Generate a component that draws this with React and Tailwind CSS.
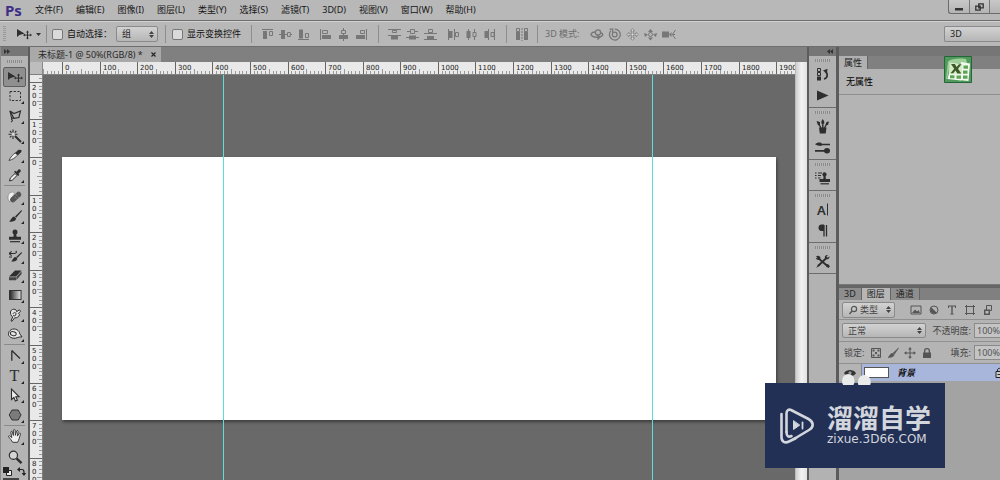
import React, { useLayoutEffect, useRef, useState } from "react";

const MENUS = ["文件(F)", "编辑(E)", "图像(I)", "图层(L)", "类型(Y)", "选择(S)", "滤镜(T)", "3D(D)", "视图(V)", "窗口(W)", "帮助(H)"];
const STEP = 37.59;

function Svg({ w = 14, h = 14, children, className = "" }) {
  return (
    <svg width={w} height={h} viewBox={`0 0 ${w} ${h}`} className={`shrink-0 ${className}`} fill="none" stroke="none" aria-hidden="true">
      {children}
    </svg>
  );
}

/* ---------- tool icons, 16 x 16 ---------- */

const D = "#2e2e2e";
const MoveIcon = () => (
  <Svg w={16} h={12}>
    <path d="M1 1v8l2.4-2L8.5 5.6z" fill={D} />
    <path d="M11.5 3.6v7M8 7.1h7" stroke={D} strokeWidth="1" />
    <path d="M11.5 2.6l1.5 1.8h-3zM11.5 11.6l1.5-1.8h-3zM7 7.1l1.8-1.5v3zM16 7.1l-1.8-1.5v3z" fill={D} />
  </Svg>
);

const TOOLS = {
  marquee: ["矩形选框", <rect x="3" y="3.5" width="10.5" height="9" stroke={D} strokeDasharray="2.2 1.5" />],
  lasso: ["套索", <><path d="M3 3l4 2.6L13.5 3l-1.6 6.5-5 .8z" stroke={D} strokeWidth="1.2" /><path d="M6.9 10.3c-2-.6-3 .6-1.9 1.4s-.2 1.8-1 2.3M3 3l1.6 7" stroke={D} strokeWidth="1.1" /></>],
  wand: ["魔棒", <><path d="M8 8l6 6" stroke={D} strokeWidth="2" /><path d="M6 1.5v3M6 8v3M1.5 6.2h3M8 6.2h2.6M2.9 3l1.7 1.7M9.3 3L7.8 4.6M2.9 9.4l1.6-1.6" stroke={D} strokeWidth="1.1" /><circle cx="6.2" cy="6.2" r="1.1" fill="#ddd" /></>],
  slice: ["切片", <><path d="M2 13.5c1.5-3.6 4-6 6.4-7.6l2.2 2.2c-2.2 2.6-5 4.5-8.6 5.4z" fill="#eee" stroke={D} strokeWidth=".8" /><path d="M8 6l3.5-3.2 3 .2-.2 2L11 8.3z" fill={D} /></>],
  dropper: ["吸管", <><path d="M2.5 14l.8-3L8 6.5l2 2-4.7 4.6z" fill="#eee" stroke={D} strokeWidth="1" /><path d="M7 4.8l1.2-1 1.3.9 2-2.2c1-1 3.2.8 2 2.2l-2 2 .8 1.3-1.2 1.1z" fill={D} /></>],
  heal: ["修复画笔", <><path d="M1.5 5.5c2-3 5-3 6-1l-4.5 8c-2 0-2.5-4-1.5-7z" fill="#eee" stroke="#777" strokeWidth=".6" /><rect x="2.2" y="5.4" width="13" height="5.4" rx="2.5" transform="rotate(-42 8.7 8.1)" fill="#555" /><path d="M6.5 6.5l3.5 3.8M8.5 5l3.2 3.6" stroke="#aaa" strokeWidth=".8" strokeDasharray="1 1" /></>],
  brush: ["画笔", <><path d="M14.5 2L8 8.6l1.2 1.2L15 3z" fill={D} /><path d="M7.2 8.6l2 2c-.6 2.7-3.4 3.2-7.2 3 2-.8 2-4.4 5.2-5z" fill={D} /></>],
  stamp: ["仿制图章", <><circle cx="8" cy="4" r="2.5" fill={D} /><path d="M6.9 5h2.2l.5 3.8h4.4v3H2v-3h4.4z" fill={D} /><path d="M3 13.7h10" stroke={D} strokeWidth="1.2" /></>],
  history: ["历史记录画笔", <><path d="M14.5 4L9 9.2l1 1 5-5.2z" fill={D} /><path d="M8.6 9l1.8 1.9c-.8 2.3-3.4 2.7-6.4 2.5 1.9-.8 1.8-3.8 4.6-4.4z" fill={D} /><path d="M2 5.5h5c2 0 3-1.2 1.8-2.5M2.2 5.4l2.4-2M2.2 5.6l2.4 2M2 9h3" stroke={D} strokeWidth="1.2" /></>],
  eraser: ["橡皮擦", <><path d="M2 9.500L8 3.500h6.500L9 9.500z" fill={D} /><path d="M2 10.200h7v3H2zM9.400 10l5.200-5.700v2.800l-5.200 6z" fill="#444" /></>],
  gradient: ["渐变", <><defs><linearGradient id="tool-gradient"><stop stopColor="#222" /><stop offset="1" stopColor="#e6e6e6" /></linearGradient></defs><rect x="2.5" y="3.5" width="11.5" height="9" fill="url(#tool-gradient)" stroke="#333" /></>],
  smudge: ["涂抹", <><path d="M4 13.8L5.700 10C2 7 3.200 2.200 6.800 2.200c2.200 0 2.800 1.400 2.800 2.500l2.800-1.900 1.200 1.400-2.200 2.200 1.200 1.300c-.6 2-2.600 3.400-5 3.100L5 14.300z" fill="#e2e2e2" stroke={D} strokeWidth="1" /><path d="M6 7c.5-2 3-2 3 0s-1.800 2.200-3 1.500" stroke={D} /></>],
  sponge: ["海绵", <><path d="M1.500 7.200c1-4.500 6.700-5.500 9.700-2.500 1 1 1.500 2 1.500 3l2.300 3.200c-3.700-.4-6 2-9 1.300C3 11.500 1 9.800 1.500 7.200z" fill="#e6e6e6" stroke={D} strokeWidth="1" /><ellipse cx="6.3" cy="7.6" rx="3" ry="2" stroke={D} strokeWidth="1" transform="rotate(14 6 7.5)" /></>],
  pen: ["钢笔", <path d="M4.8 2.5v10.3M4.8 2.5l8.2 8" stroke={D} strokeWidth="1.3" />],
  arrow: ["路径选择", <path d="M4.5 2v10.5l2.4-2 1.5 3.6 2-.9-1.6-3.4h3.3z" fill="#eee" stroke={D} strokeWidth="1.1" />],
  shape: ["多边形", <path d="M5 3h6.2l2.8 5-2.8 5H5L2.2 8z" fill="#7b7b7b" stroke="#333" />],
  hand: ["抓手", <path d="M5.7 14.3C4.7 12 2.8 10.6 1.5 8.7c-.2-1 .9-1.3 1.7-.5l1.6 1.5-1-5.6c.1-1 1.4-1 1.6 0l1 3.4V2.3c.2-1.1 1.6-1.1 1.7 0l.3 5 1.2-4.2c.4-1 1.6-.7 1.5.3l-.7 4.7 1.7-2.6c.6-.8 1.7-.3 1.4.6-1 3-1.4 5.7-2.9 8.2z" fill="#eee" stroke={D} strokeWidth=".9" />],
  zoom: ["缩放", <><circle cx="6.4" cy="6.2" r="4.1" fill="#d4d4d4" stroke={D} strokeWidth="1.2" /><path d="M9.5 9.3l5 4.8" stroke={D} strokeWidth="2.4" /></>],
};

function Tool({ id }) {
  const [label, art] = TOOLS[id] || [];
  return (
    <button aria-label={id === "type" ? "文字" : label} className="relative flex min-h-0 items-center justify-center">
      {id === "type" ? (
        <span className="font-['Liberation_Serif'] text-[16px] leading-4 text-[#2e2e2e]">T</span>
      ) : (
        <Svg w={16} h={16} className="max-h-full">{art}</Svg>
      )}
      {id !== "zoom" && (
        <Svg w={3} h={3} className="absolute bottom-[2px] right-[2px]"><path d="M3 0v3H0z" fill="#222" /></Svg>
      )}
    </button>
  );
}

const Rule = () => <div className="mx-[3px] h-px shrink-0 bg-[#8a8a8a]" />;
const Grip = () => (
  <div className="mx-auto h-[3px] w-[15px] shrink-0 bg-[repeating-linear-gradient(90deg,#8a8a8a_0_1px,#b8b8b8_1px_2px)]" />
);

function ToolBar() {
  return (
    <aside className="flex w-7 shrink-0 flex-col border-l border-[#8a8a8a] bg-[#b4b4b4]">
      <div className="flex h-[9px] shrink-0 items-center bg-[#767676] pl-[3px]">
        <Svg w={6} h={5}><path d="M0 0l3 2.5L0 5zM3 0l3 2.5L3 5z" fill="#333" /></Svg>
      </div>
      <div className="py-1"><Grip /></div>
      <div className="grid h-[118px] shrink-0 auto-rows-fr px-[2px]">
        <button aria-label="移动" className="flex items-center justify-center rounded-[2px] border border-[#5e5e5e] bg-[#8f8f8f]"><MoveIcon /></button>
        {["marquee", "lasso", "wand", "slice", "dropper"].map((t) => <Tool key={t} id={t} />)}
      </div>
      <Rule />
      <div className="grid h-[158px] shrink-0 auto-rows-fr px-[2px] pt-px">
        {["heal", "brush", "stamp", "history", "eraser", "gradient", "smudge", "sponge"].map((t) => <Tool key={t} id={t} />)}
      </div>
      <Rule />
      <div className="grid h-[80px] shrink-0 auto-rows-fr px-[2px] pt-px">
        {["pen", "type", "arrow", "shape"].map((t) => <Tool key={t} id={t} />)}
      </div>
      <Rule />
      <div className="grid h-[41px] shrink-0 auto-rows-fr px-[2px]">
        {["hand", "zoom"].map((t) => <Tool key={t} id={t} />)}
      </div>
      <div className="flex shrink-0 justify-between px-[2px]">
        <Svg w={9} h={9}><path d="M3.5 3.5h5v5h-5z" fill="#eee" stroke="#222" /><path d="M0 0h6v6H0z" fill="#222" /></Svg>
        <Svg w={9} h={9}><path d="M2 2.5h3c1.5 0 2 1 2 3v1" stroke="#222" strokeWidth="1.2" /><path d="M0 2.5L3 0v5zM7 9L4.6 6h4.6z" fill="#222" /></Svg>
      </div>
      <div className="mt-[2px] ml-[2px] h-4 w-4 border border-[#444] bg-[#222]" />
    </aside>
  );
}

/* ---------- options bar ---------- */

const Sep = () => <div className="h-[18px] w-px shrink-0 bg-[#8e8e8e]" />;
const A = "#777";

const ALIGN = [
  ["顶对齐", <><path d="M1 1.5h11" stroke={A} /><path d="M2 3h4v8H2z" fill={A} /><path d="M8.5 3.5h3v4h-3z" stroke={A} /></>],
  ["垂直居中对齐", <><path d="M0 6.5h13" stroke={A} /><path d="M2 2h4v9H2z" fill={A} /><path d="M8.5 4.5h2.8v4H8.5z" stroke={A} fill="#b8b8b8" /></>],
  ["底对齐", <><path d="M1 11.5h11" stroke={A} /><path d="M2 1.5h4v9H2z" fill={A} /><path d="M8.5 5.5h3v4h-3z" stroke={A} /></>],
  ["左对齐", <><path d="M1.5 1v11" stroke={A} /><path d="M3 7h9v4H3z" fill={A} /><path d="M3.5 2.5h5v3h-5z" stroke={A} /></>],
  ["水平居中对齐", <><path d="M6.5 0v13" stroke={A} /><path d="M2 7h9v4H2z" fill={A} /><path d="M4.5 2.5h4v3h-4z" stroke={A} fill="#b8b8b8" /></>],
  ["右对齐", <><path d="M11.5 1v11" stroke={A} /><path d="M1 7h9v4H1z" fill={A} /><path d="M5.5 2.5h4v3h-4z" stroke={A} /></>],
];
const DISTRIBUTE = [
  ["按顶分布", <><path d="M0 1.5h13M0 7.5h13" stroke={A} /><path d="M3 8h7v3.5H3z" fill={A} /><path d="M4.5 2.5h4v2h-4z" stroke={A} /></>],
  ["垂直居中分布", <><path d="M1 3.5h11M0 9.5h13" stroke={A} /><path d="M3 7.5h7v4H3z" fill={A} /><path d="M4.5 1.5h4v4h-4z" stroke={A} fill="#b8b8b8" /></>],
  ["按底分布", <><path d="M0 5.5h13M0 11.5h13" stroke={A} /><path d="M3 8h7v3H3z" fill={A} /><path d="M4.5 1.5h4v3h-4z" stroke={A} /></>],
  ["按左分布", <><path d="M1.5 1v11M7.5 1v11" stroke={A} /><path d="M2 3h3.5v7H2z" fill={A} /><path d="M8.5 4.5h3v4h-3z" stroke={A} /></>],
  ["水平居中分布", <><path d="M3.5 1v11M9.5 1v11" stroke={A} /><path d="M1.5 3h4v7h-4z" fill={A} /><path d="M8 4.5h3v4H8z" stroke={A} fill="#b8b8b8" /></>],
  ["按右分布", <><path d="M5.5 1v11M11.5 1v11" stroke={A} /><path d="M1.5 3H5v7H1.5z" fill={A} /><path d="M8 4.5h3v4H8z" stroke={A} /></>],
];
const MODES = [
  ["旋转", <><circle cx="8" cy="4.4" r="2.6" stroke={A} strokeWidth="1.3" /><path d="M5.5 4C2 4 0 6 1.5 7.6s5 1.8 7.5 1.4c4-.6 5-3 2-4.2M7 7l3 2-2.6 2.4" stroke={A} strokeWidth="1.4" /></>],
  ["滚动", <><circle cx="6.700" cy="6.500" r="2.400" stroke={A} strokeWidth="1.3" /><path d="M3 2.800a5.400 5.400 0 1 0 3.700-1.600M1.500 1.200h3.200v3.200" stroke={A} strokeWidth="1.3" /></>],
  ["拖动", <path d="M6.500.7l2 2.200H7.200v2.900h2.900V4.500l2.200 2-2.200 2V7.200H7.200v2.900h1.300l-2 2.200-2-2.200h1.300V7.200H2.900v1.300l-2.200-2 2.200-2v1.300h2.900V2.900H4.500z" fill="#ddd" stroke={A} strokeWidth=".8" />],
  ["滑动", <><circle cx="6.5" cy="6.5" r="2" stroke={A} /><path d="M6.5 1l2.500 3H4zM6.500 12.500L9 9.500H4zM0 5l4 1.500L1 9zM13 5L9 6.500 12 9z" fill={A} /></>],
  ["缩放", <><path d="M0 3.5h7v6H0z" fill={A} /><path d="M7 6.5l2.5-2.4v4.8z" fill={A} /><path d="M13.5 2l-3.2 4.5 3.2 4.5M10.5 6.5H13" stroke={A} /></>],
];

const IconGroup = ({ items, gap }) => (
  <div className={`flex items-center ${gap}`}>
    {items.map(([label, art]) => (
      <button key={label} aria-label={label} className="shrink-0"><Svg w={14} h={13}>{art}</Svg></button>
    ))}
  </div>
);

const UpDown = ({ className = "" }) => (
  <Svg w={5} h={7} className={`pointer-events-none ${className}`}><path d="M2.5 0L5 3H0zM2.5 7L0 4h5z" fill="#444" /></Svg>
);

function Picker({ label, value, className, pad = "pl-[5px]", tone = "text-[#1c1c1c]", arrows = true, icon }) {
  return (
    <div className={`relative flex shrink-0 items-center rounded-[2px] border border-[#8a8a8a] bg-linear-to-b from-[#d2d2d2] to-[#b6b6b6] ${className}`}>
      {icon}
      <select aria-label={label} className={`h-full w-full appearance-none bg-transparent leading-3 outline-none ${pad} ${tone}`}>
        <option>{value}</option>
      </select>
      {arrows && <UpDown className="absolute right-[3px]" />}
    </div>
  );
}

const Check = ({ id, children }) => (
  <div className="flex shrink-0 items-center gap-[4px]">
    <input id={id} type="checkbox" className="h-[11px] w-[11px] appearance-none rounded-[2px] border border-[#777] bg-[#dadada]" />
    <label htmlFor={id} className="whitespace-nowrap">{children}</label>
  </div>
);

function OptionsBar() {
  return (
    <div className="flex h-[25px] shrink-0 items-center overflow-hidden border-t border-[#d0d0d0] bg-[#b8b8b8] text-[#111]">
      <div className="flex w-[46px] shrink-0 items-center">
        <div className="ml-[3px] h-4 w-[3px] bg-[repeating-linear-gradient(#999_0_1px,#b8b8b8_1px_2px)]" />
        <button aria-label="移动工具预设" className="ml-[10px] flex items-center gap-[4px]">
          <MoveIcon /><Svg w={5} h={3}><path d="M0 0h5L2.5 3z" fill="#333" /></Svg>
        </button>
      </div>
      <Sep />
      <div className="flex w-[118px] shrink-0 items-center justify-between pr-[7px] pl-[5px]">
        <Check id="auto-select">自动选择：</Check>
        <Picker label="自动选择" value="组" className="h-4 w-[42px]" />
      </div>
      <Sep />
      <div className="w-[85px] shrink-0 pl-[6px]"><Check id="show-transform">显示变换控件</Check></div>
      <Sep />
      <div className="flex w-[126px] shrink-0 items-center justify-between px-[9px]">
        <IconGroup items={ALIGN.slice(0, 3)} gap="gap-[4px]" />
        <IconGroup items={ALIGN.slice(3)} gap="gap-[4px]" />
      </div>
      <Sep />
      <div className="flex w-[127px] shrink-0 items-center justify-between px-[9px]">
        <IconGroup items={DISTRIBUTE.slice(0, 3)} gap="gap-[4px]" />
        <IconGroup items={DISTRIBUTE.slice(3)} gap="gap-[4px]" />
      </div>
      <Sep />
      <button aria-label="自动对齐图层" className="flex w-[30px] shrink-0 justify-center">
        <Svg w={14} h={13}><path d="M1 4h4v8H1zM9 4h4v8H9z" fill={A} /><path d="M1.5.5h3v3h-3zM9.5.5h3v3h-3z" stroke={A} /><path d="M7 0v13" stroke={A} strokeDasharray="2 1" /></Svg>
      </button>
      <Sep />
      <div className="w-[52px] shrink-0 pl-[7px] text-[#6c6c6c]">3D 模式:</div>
      <IconGroup items={MODES} gap="gap-[4px]" />
      <Picker label="工作区" value="3D" className="ml-auto h-4 w-[56px] rounded-r-none border-r-0" arrows={false} />
    </div>
  );
}

function MenuBar() {
  return (
    <header className="flex h-[21px] shrink-0 items-center overflow-hidden border-b border-[#6e6e6e] bg-[#b8b8b8]">
      <div className="w-[35px] shrink-0 pl-[5px] text-[15px] leading-4 font-bold text-[#3d2f86]">Ps</div>
      <nav className="flex gap-[13px] text-[#161616]">
        {MENUS.map((m) => <button key={m} className="shrink-0 whitespace-nowrap">{m}</button>)}
      </nav>
      <div className="ml-auto flex h-[14px] w-[52px] shrink-0 self-start rounded-bl-[3px] border-b border-l border-[#6b6b6b] bg-linear-to-b from-[#c8c8c8] to-[#b4b4b4]">
        <button aria-label="最小化" className="flex w-[21px] justify-center border-r border-[#777] pt-2"><Svg w={8} h={3}><path d="M0 0h8v2.5H0z" fill="#333" /></Svg></button>
        <button aria-label="还原" className="flex w-[20px] items-center justify-center border-r border-[#777]">
          <Svg w={9} h={8}><path d="M3.8.8h4.4v4H3.800zM.8 3.200h4.400v4H.8z" stroke="#333" strokeWidth="1.3" fill="#bbb" /></Svg>
        </button>
      </div>
    </header>
  );
}

/* ---------- document ---------- */

function useSize() {
  const ref = useRef(null);
  const [size, setSize] = useState({ width: 0, height: 0 });
  useLayoutEffect(() => {
    const read = () => {
      const r = ref.current.getBoundingClientRect();
      setSize({ width: r.width, height: r.height });
    };
    read();
    window.addEventListener("resize", read);
    return () => window.removeEventListener("resize", read);
  }, []);
  return [ref, size];
}

const ticks = (length, origin) => {
  const unit = STEP / 10;
  const out = [];
  for (let i = -Math.floor(origin / unit); origin + i * unit < length; i++) out.push([i, Math.round(origin + i * unit) + 0.5]);
  return out;
};
const tickStart = (i) => (i % 10 === 0 ? 0 : i % 5 === 0 ? 7 : 9);
const tickTone = (i) => (i % 10 === 0 ? "#666" : "#999");

function HorizontalRuler() {
  const [ref, { width }] = useSize();
  const marks = ticks(width, 19);
  return (
    <svg ref={ref} className="block h-3 w-full min-w-0 flex-1 bg-[#e9e9e9]" aria-label="水平标尺">
      {marks.map(([i, x]) => <path key={i} d={`M${x} ${tickStart(i)}V12`} stroke={tickTone(i)} />)}
      {marks.filter(([i]) => i % 10 === 0).map(([i, x]) => (
        <text key={i} x={x + 2.5} y="8" fontSize="7" fill="#222" className="font-['DejaVu_Sans']">{Math.abs(i * 10)}</text>
      ))}
    </svg>
  );
}

function VerticalRuler() {
  const [ref, { height }] = useSize();
  const marks = ticks(height, 82);
  return (
    <svg ref={ref} className="block h-full w-3 shrink-0 bg-[#e9e9e9]" aria-label="垂直标尺">
      {marks.map(([i, y]) => <path key={i} d={`M${tickStart(i)} ${y}H12`} stroke={tickTone(i)} />)}
      {marks.filter(([i]) => i % 10 === 0).map(([i, y]) =>
        String(Math.abs(i * 10)).split("").map((c, k) => (
          <text key={`${i}-${k}`} x="2" y={y + 7.5 + k * 8} fontSize="7" fill="#222" className="font-['DejaVu_Sans']">{c}</text>
        ))
      )}
    </svg>
  );
}

function Document() {
  return (
    <main className="flex min-w-0 flex-1 flex-col border-x-2 border-[#5c5c5c] bg-[#808080]">
      <div className="flex h-[15px] shrink-0">
        <div className="flex items-center gap-2 bg-[#a9a9a9] pr-[5px] pl-2 whitespace-nowrap text-[#2a2a2a]">
          <span>未标题-1 @ 50%(RGB/8) *</span>
          <button aria-label="关闭"><Svg w={5} h={5}><path d="M.5.5l4 4M4.5.5l-4 4" stroke="#222" strokeWidth="1.1" /></Svg></button>
        </div>
      </div>
      <div className="flex min-h-0 flex-1">
        <div className="flex min-w-0 flex-1 flex-col">
          <div className="flex h-[13px] shrink-0 border-b border-[#808080]">
            <div className="w-[13px] shrink-0 border-r border-[#888] bg-[#bdbdbd]" />
            <HorizontalRuler />
          </div>
          <div className="flex min-h-0 flex-1">
            <div className="flex w-[13px] shrink-0 border-r border-[#808080]"><VerticalRuler /></div>
            <div className="relative min-w-0 flex-1 overflow-hidden bg-[#696969]">
              <div className="absolute top-[82px] left-[19px] h-[263px] w-[714px] bg-white shadow-[1px_2px_3px_#3c3c3c]" />
              <div className="absolute inset-y-0 left-[180px] w-px bg-[#5cdcdc]" />
              <div className="absolute inset-y-0 left-[609px] w-px bg-[#5cdcdc]" />
            </div>
          </div>
        </div>
        <div className="w-3 shrink-0 border-l border-[#bbb] bg-linear-to-r from-[#cfcfcf] via-[#f2f2f2] to-[#e2e2e2]" />
      </div>
    </main>
  );
}

/* ---------- collapsed dock ---------- */

const DOCK = [
  [
    ["历史记录", <><path d="M2.5 1.5h3v3h-3zM2.5 5.5h3v3h-3z" stroke={D} /><path d="M2 9.5h4v4H2z" fill={D} /><path d="M9 12c4-1.2 4-5.5 1.4-7.5" stroke={D} strokeWidth="1.7" /><path d="M8 3.5l4.5-1.8-.6 5z" fill={D} /></>],
    ["动作", <path d="M2 2.5v10l11.5-5z" fill={D} />],
  ],
  [
    ["画笔预设", <><path d="M4 8.5h7.5l-.8 6H4.8z" fill={D} /><path d="M6 9L3.5 4.5M7.8 9V4M9.5 9L12 4.5" stroke={D} strokeWidth="1.4" /><path d="M1.5 2l3.5 1v3l-2 .3zM7.7 0l1.5 2.2v2.6H6.4V2.2zM14 2.500l-1 3.600-2.500-.4 1-2.600z" fill={D} /></>],
    ["画笔", <><path d="M5.5 4.5H15M0 10.8h11" stroke={D} strokeWidth="1.7" /><path d="M0 4.3c2-2 4-2.3 6-1.5l1.5 1.7L6 6C3.5 6 2 5.5 0 4.3z" fill={D} /><ellipse cx="12" cy="10.8" rx="3" ry="2.7" fill={D} /></>],
  ],
  [["仿制源", <><path d="M0 2h1.5M3 2h4M0 4.5h1.5M3 4.5h3M0 7h1.5M3 7h2.5" stroke={D} /><circle cx="9.5" cy="3.4" r="2.1" fill={D} /><path d="M8.600 4.500h1.900l.4 3.500H15v3H4.500V8h3.800z" fill={D} /><path d="M5.5 12.8h8.5" stroke={D} strokeWidth="1.2" /></>]],
  [
    ["字符", <path d="M12.5 1.5v12" stroke={D} strokeWidth="1" />, "A"],
    ["段落", <><path d="M11.5 2v11.5M9 2v11.5" stroke={D} strokeWidth="1.3" /><path d="M12.2 1.5H6.5c-4 0-4 6.5 0 6.5H9V1.5z" fill={D} /></>],
  ],
  [["工具预设", <><path d="M3 4l9.5 8M12 3.5L3 12" stroke={D} strokeWidth="1.8" /><path d="M1 2.5c2-1.5 4.5-.5 4.5 2L3.7 6C2.4 6 1 5.3.8 4l2 .2zM14.5 2.3l-1.8 1.5-1.3-1L13 1c-2-.5-4 1-3 3l1.6 1.2c2 .3 3.2-1.2 2.9-2.900zM1 14l2.500-3.700 1.300 1.300zM11 10.500l2-.5 2 2.600-1.700 1.300-2.600-2z" fill={D} /></>]],
];

function Dock() {
  return (
    <aside className="w-[27px] shrink-0 bg-[#b2b2b2]">
      <div className="flex h-[9px] items-center justify-end bg-[#767676] pr-[3px]">
        <Svg w={6} h={5}><path d="M3 0L0 2.5 3 5zM6 0L3 2.5 6 5z" fill="#333" /></Svg>
      </div>
      {DOCK.map((group, i) => (
        <div key={i} className="border-b border-[#6c6c6c] pt-[3px] pb-px">
          <Grip />
          <div className="mt-[2px]">
            {group.map(([label, art, glyph]) => (
              <button key={label} aria-label={label} className="relative flex h-[21px] w-full items-center justify-center">
                {glyph && <span className="absolute left-2 font-['Noto_Sans'] text-[13px] leading-4 font-semibold text-[#2e2e2e]">{glyph}</span>}
                <Svg w={15} h={15}>{art}</Svg>
              </button>
            ))}
          </div>
        </div>
      ))}
    </aside>
  );
}

/* ---------- panels ---------- */

const G = "#555";
const FILTERS = [
  ["像素", <><path d="M1 2h10v8H1z" stroke={G} /><path d="M2 9l3-3.500 2 2L8.500 6 10 9z" fill={G} /></>],
  ["调整", <><circle cx="6" cy="6" r="4" stroke={G} /><path d="M3.2 3.2a4 4 0 0 0 5.6 5.6z" fill={G} /></>],
  ["文字", <path d="M2 1.500h8v2.400h-.8L8.800 2.600H6.700v6.800l1 .3v.8H4.300v-.8l1-.3V2.600H3.200l-.4 1.300H2z" fill={G} />],
  ["形状", <path d="M2.5 1v10M9.5 1v10M1 2.5h10M1 9.5h10" stroke={G} />],
  ["智能对象", <><path d="M4.5 1.5h5v5h-5z" stroke={G} /><path d="M2 5.5h6V11H2z" fill={G} /><path d="M3.5 7h3v2.5h-3z" fill="#bbb" /></>],
];
const LOCKS = [
  ["锁定透明像素", <><path d="M1.5 1.5h9v9h-9z" stroke={G} /><path d="M2.5 2.5h2v2h-2zM7.5 2.5h2v2h-2zM5 5h2v2H5zM2.5 7.5h2v2h-2zM7.5 7.5h2v2h-2z" fill={G} /></>],
  ["锁定图像像素", <path d="M11.5 1L6 6.3l1.2 1.2zM5.3 6.3l1.7 1.8c-.6 2-2.8 2.400-6 2.300 2-.6 1.600-3.800 4.300-4.100z" fill={G} stroke={G} strokeWidth=".6" />],
  ["锁定位置", <><path d="M6 1.5v9M1.5 6h9" stroke={G} /><path d="M6 0l1.800 2.400H4.200zM6 12l1.800-2.400H4.200zM0 6l2.400-1.800v3.600zM12 6L9.600 4.200v3.600z" fill={G} /></>],
  ["锁定全部", <><path d="M2 5.5h8V11H2z" fill={G} /><path d="M3.7 6V3.5c0-2.6 4.6-2.6 4.6 0V6" stroke={G} strokeWidth="1.3" /></>],
];

const IconRow = ({ items, gap = "gap-[6px]" }) => (
  <div className={`flex shrink-0 ${gap}`}>
    {items.map(([label, art]) => <button key={label} aria-label={label}><Svg w={12} h={12}>{art}</Svg></button>)}
  </div>
);

const Tab = ({ active, children }) => (
  <button role="tab" aria-selected={!!active} className={active ? "border-r border-[#666] bg-[#b6b6b6] px-[5px] text-[#222]" : "border-r border-[#666] bg-[#8e8e8e] px-[5px] text-[#222]"}>{children}</button>
);

const Percent = ({ id, label }) => (
  <div className="ml-auto flex shrink-0 items-center gap-[3px]">
    <label htmlFor={id} className="whitespace-nowrap text-[#444]">{label}</label>
    <input id={id} defaultValue="100%" className="h-[15px] w-[26px] border border-r-0 border-[#8a8a8a] bg-[#c4c4c4] pl-[2px] text-[#555] outline-none" />
  </div>
);

function Panels() {
  return (
    <aside className="flex w-[164px] shrink-0 flex-col overflow-hidden border-l-[3px] border-[#5c5c5c] bg-[#a3a3a3]">
      <div className="h-[9px] shrink-0 bg-[#767676]" />
      <section className="flex h-[229px] shrink-0 flex-col border-b border-[#777] bg-[#b4b4b4]">
        <div role="tablist" className="flex h-[13px] shrink-0 bg-[#808080]">
          <button role="tab" aria-selected="true" className="border-r border-[#666] bg-[#b0b0b0] px-[5px] text-[#222]">属性</button>
        </div>
        <div className="flex h-[26px] shrink-0 items-center border-b border-[#8e8e8e] pl-[7px] text-[#000]">无属性</div>
      </section>
      <div className="h-[3px] shrink-0 bg-[#666]" />
      <section className="shrink-0 bg-[#b4b4b4]">
        <div role="tablist" className="flex h-3 bg-[#808080]">
          <Tab>3D</Tab><Tab active>图层</Tab><Tab>通道</Tab>
        </div>
        <div className="flex h-5 items-center gap-[15px] border-b border-[#909090] pl-[3px]">
          <Picker label="类型" value="类型" className="h-4 w-[53px]" pad="pl-[2px]" tone="text-[#444]"
            icon={<Svg w={10} h={10} className="ml-[5px]"><circle cx="6" cy="4" r="2.6" stroke={G} strokeWidth="1.2" /><path d="M4 6L1.5 9" stroke={G} strokeWidth="1.4" /></Svg>} />
          <IconRow items={FILTERS} />
        </div>
        <div className="flex h-[22px] items-center border-b border-[#909090] pl-[3px]">
          <Picker label="混合模式" value="正常" className="h-[15px] w-[84px]" tone="text-[#444]" />
          <Percent id="opacity" label="不透明度:" />
        </div>
        <div className="flex h-[22px] items-center border-b border-[#909090] pl-[5px]">
          <span className="w-[26px] shrink-0 text-[#444]">锁定:</span>
          <IconRow items={LOCKS} gap="gap-[5px]" />
          <Percent id="fill" label="填充:" />
        </div>
        <div className="flex h-[17px] items-center bg-[#a9b6dc]">
          <button aria-label="图层可见性" className="relative flex h-full w-[23px] shrink-0 items-center justify-center border-r border-[#888] bg-[#b4b4b4]">
            <Svg w={12} h={10}><path d="M0 5.200C2.500.8 9.500.8 12 5.200 9.500 9 2.500 9 0 5.200z" fill="#333" /><circle cx="6" cy="4.800" r="1.600" fill="#999" /></Svg>
            <Svg w={30} h={12} className="absolute top-[9px] left-[3px] z-10"><ellipse cx="6.3" cy="8" rx="6.3" ry="7" fill="#e9ebea" /><ellipse cx="22.3" cy="9" rx="6.5" ry="7" fill="#e9ebea" /></Svg>
          </button>
          <div className="ml-[2px] h-[11px] w-[25px] shrink-0 border border-[#555] bg-white" />
          <span className="ml-2 font-bold text-[#111] italic">背景</span>
          <Svg w={9} h={11} className="mr-[-4px] ml-auto"><path d="M1 4.500h7v6H1z" stroke="#222" fill="#ccc" /><path d="M2.500 4.500V3c0-2.200 4-2.200 4 0v1.500M2.500 7.500h4" stroke="#222" /></Svg>
        </div>
      </section>
    </aside>
  );
}

/* ---------- floating items ---------- */

const SheetBadge = () => (
  <div className="absolute top-[56px] right-[28px]">
    <svg width="28" height="27" viewBox="0 0 28 27" aria-hidden="true">
      <path d="M.5.5h27v26H.5z" fill="#4f9a5a" stroke="#24663a" />
      <path d="M4 5.500C8 2.500 14 2 22 3l1 4-17 1-3 15H2z" fill="#9fcf98" />
      <path d="M17 6l9 1.500-1.500 17.500-10-1z" fill="#f4f9f2" />
      <path d="M5 17h12v7.500L3.500 23z" fill="#f4f9f2" />
      <path d="M5.500 6.500L18.500 8l-.7 10.500-13-.8z" fill="#d3ebc9" />
      <path d="M7 8h3.800l1.900 2.900L15 8.200h2.500l-3.500 4.600 3.300 4.700h-3.900l-1.900-2.900-2.300 2.700H6.500l3.700-4.600z" fill="#3c5a26" />
      <path d="M19.500 9.500h4.500v3.200h-4.500zM19 14.500h4.500v3.200H19zM19 19.500h4.500v3.200H19zM12.500 19.500H17v3.200h-4.500zM6 19.200h4.500v3H6z" fill="#5da554" />
    </svg>
  </div>
);

const Watermark = () => (
  <div className="absolute right-[55px] bottom-3 flex h-[85px] w-[180px] items-center bg-[#223056] pl-[14px] text-[#d3d6dc]">
    <svg width="36" height="38" viewBox="0 0 36 38" fill="none" stroke="#d3d6dc" strokeWidth="2.6" strokeLinecap="round" strokeLinejoin="round" aria-hidden="true">
      <path d="M7.500 25V6.500c0-3 2-4.500 4.500-3.500l17.500 9c5.500 3 5.500 8 .5 11L15 32" />
      <path d="M2.500 7v23c0 5 3.500 6.500 7.500 4.500l7-3.500" />
      <path d="M7.500 25c0 4.500 2 5.500 5 4" />
      <path d="M14.500 14v8.500l6-4.200z" fill="#d3d6dc" strokeWidth="1" />
      <path d="M23.500 15.500v6" strokeWidth="1.800" />
    </svg>
    <div className="ml-3 pb-px whitespace-nowrap">
      <div className="text-[26px] leading-[26px] font-bold">溜溜自学</div>
      <div className="mt-[2px] font-['DejaVu_Sans'] text-[12px] leading-3">zixue.3D66.COM</div>
    </div>
  </div>
);

export default function App() {
  return (
    <div className="relative flex h-screen flex-col overflow-hidden bg-[#808080] font-['Noto_Sans','Noto_Sans_CJK_SC',sans-serif] text-[9px] leading-3">
      <MenuBar />
      <OptionsBar />
      <div className="flex min-h-0 flex-1 border-t border-[#6e6e6e]">
        <ToolBar />
        <Document />
        <Dock />
        <Panels />
      </div>
      <SheetBadge />
      <Watermark />
    </div>
  );
}
